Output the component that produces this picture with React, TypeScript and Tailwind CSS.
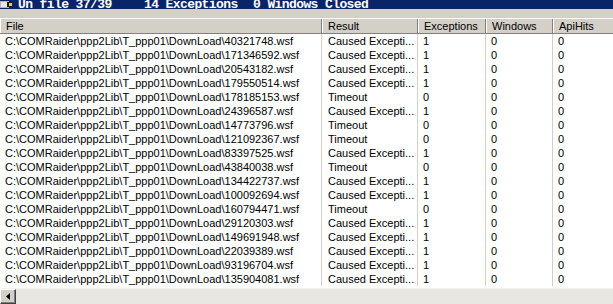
import React from "react";

type Row = { file: string; result: string; exceptions: string };

const rows: Row[] = [
  { file: "40321748", result: "Caused Excepti...", exceptions: "1" },
  { file: "171346592", result: "Caused Excepti...", exceptions: "1" },
  { file: "20543182", result: "Caused Excepti...", exceptions: "1" },
  { file: "179550514", result: "Caused Excepti...", exceptions: "1" },
  { file: "178185153", result: "Timeout", exceptions: "0" },
  { file: "24396587", result: "Caused Excepti...", exceptions: "1" },
  { file: "14773796", result: "Timeout", exceptions: "0" },
  { file: "121092367", result: "Timeout", exceptions: "0" },
  { file: "83397525", result: "Caused Excepti...", exceptions: "1" },
  { file: "43840038", result: "Timeout", exceptions: "0" },
  { file: "134422737", result: "Caused Excepti...", exceptions: "1" },
  { file: "100092694", result: "Caused Excepti...", exceptions: "1" },
  { file: "160794471", result: "Timeout", exceptions: "0" },
  { file: "29120303", result: "Caused Excepti...", exceptions: "1" },
  { file: "149691948", result: "Caused Excepti...", exceptions: "1" },
  { file: "22039389", result: "Caused Excepti...", exceptions: "1" },
  { file: "93196704", result: "Caused Excepti...", exceptions: "1" },
  { file: "135904081", result: "Caused Excepti...", exceptions: "1" },
];

const cols = [
  { label: "File", w: "w-[322px]" },
  { label: "Result", w: "w-[96px]" },
  { label: "Exceptions", w: "w-[68px]" },
  { label: "Windows", w: "w-[67px]" },
  { label: "ApiHits", w: "w-[80px]" },
];

const AppIcon = () => (
  <svg width="13" height="9" viewBox="0 0 13 9" className="shrink-0">
    <rect x="0" y="1" width="9" height="7" fill="#b8b4ac" />
    <rect x="1" y="2" width="6" height="5" fill="#e8e6e0" />
    <rect x="7" y="2" width="5" height="5" fill="#1a1a1a" />
    <rect x="9" y="3" width="3" height="3" fill="#f2d22a" />
  </svg>
);

export default function App() {
  return (
    <div className="w-[613px] h-[304px] overflow-hidden bg-[#d4d0c8] flex flex-col font-['Liberation_Sans',Arial,sans-serif] text-[11px] text-black">
      {/* title strip, clipped at the top */}
      <div className="h-[9px] shrink-0 bg-[#0a246a] flex items-end overflow-hidden text-white">
        <AppIcon />
        <div className="flex font-['Liberation_Mono',monospace] font-bold text-[13px] leading-[13px] tracking-[-0.6px] mb-[-2px] whitespace-pre">
          <span className="ml-[5px] w-[126px]">Un file 37/39</span>
          <span className="w-[109px]">14 Exceptions</span>
          <span>0 Windows Closed</span>
        </div>
      </div>

      <div className="h-[9px] shrink-0" />

      {/* list view */}
      <div className="flex-1 flex flex-col bg-white overflow-hidden">
        <div className="h-[16px] shrink-0 flex bg-[#d4d0c8] border-t border-white border-b border-b-[#808080]">
          {cols.map((c) => (
            <div
              key={c.label}
              className={`${c.w} shrink-0 h-full flex items-center px-[6px] border-r border-[#808080] shadow-[inset_1px_0_0_#ffffff] leading-none`}
            >
              {c.label}
            </div>
          ))}
        </div>

        <div className="flex-1 flex flex-col overflow-hidden">
          {rows.map((r) => (
            <div key={r.file} className="h-[14px] shrink-0 flex leading-[14px] whitespace-nowrap">
              <div className="w-[322px] shrink-0 pl-[5px] border-r border-[#d4d0c8] overflow-hidden">
                C:\COMRaider\ppp2Lib\T_ppp01\DownLoad\{r.file}.wsf
              </div>
              <div className="w-[96px] shrink-0 pl-[6px] border-r border-[#d4d0c8] overflow-hidden">
                {r.result}
              </div>
              <div className="w-[68px] shrink-0 pl-[5px] border-r border-[#d4d0c8]">{r.exceptions}</div>
              <div className="w-[67px] shrink-0 pl-[5px] border-r border-[#d4d0c8]">0</div>
              <div className="w-[80px] shrink-0 pl-[5px]">0</div>
            </div>
          ))}
        </div>

        {/* horizontal scrollbar */}
        <div className="h-[16px] shrink-0 flex bg-[#e9e7e1] border-t border-[#f4f3ee]">
          <div className="w-[16px] h-full bg-[#d4d0c8] border-t border-l border-white border-r border-b border-r-[#404040] border-b-[#404040] shadow-[inset_-1px_-1px_0_#808080] flex items-center justify-center">
            <svg width="4" height="7" viewBox="0 0 4 7">
              <path d="M4 0 L0 3.5 L4 7 Z" fill="#000" />
            </svg>
          </div>
          <div className="flex-1" />
        </div>
      </div>
    </div>
  );
}
